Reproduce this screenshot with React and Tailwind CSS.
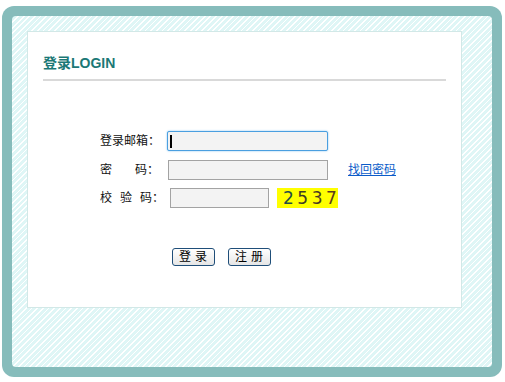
export default function App() {
  return (
    <div className="w-[505px] h-[382px] bg-white pt-[6px] pl-[2px] font-['Liberation_Sans','Noto_Sans_CJK_SC',sans-serif] text-[12px] text-[#111]">
      {/* teal frame */}
      <div className="w-[500px] h-[371px] rounded-[12px] bg-[#86bcbb] p-[10px]">
        {/* hatched area */}
        <div className="h-full rounded-[4px] bg-[image:repeating-linear-gradient(135deg,#ffffff_0px,#ffffff_1.2px,#dff6f6_1.2px,#dff6f6_4px)] pt-[15px] pl-[15px]">
          {/* white panel */}
          <div className="w-[435px] h-[277px] bg-white border border-[#d2e8e7] px-[15px]">
            <div className="mt-[22px] h-[27px] leading-[18px] border-b-2 border-[#d9d9d9] text-[14px] font-bold text-[#1b7876]">
              登录LOGIN
            </div>

            {/* form */}
            <div className="pl-[57px] mt-[50px]">
              <div className="flex items-center h-[20px]">
                <span className="w-[67px] leading-[20px]">登录邮箱：</span>
                <div className="relative w-[161px] h-[20px] border border-[#4a9fe0] rounded-[2px] bg-[#f3f3f3] shadow-[0_0_2px_#7fbff0]">
                  <span className="absolute left-[2px] top-[3px] w-[1.5px] h-[13px] bg-black" />
                </div>
              </div>

              <div className="flex items-center h-[20px] mt-[9px]">
                <span className="w-[68px] leading-[20px] flex">
                  <span>密</span>
                  <span className="ml-[23px]">码：</span>
                </span>
                <div className="w-[160px] h-[20px] border border-[#a3a3a3] bg-[#f3f3f3]" />
                <a href="#" className="ml-[20px] text-[#0b5cc9] underline">找回密码</a>
              </div>

              <div className="flex items-center h-[20px] mt-[8px]">
                <span className="w-[70px] leading-[20px] flex">
                  <span>校</span>
                  <span className="ml-[8px]">验</span>
                  <span className="ml-[8px]">码：</span>
                </span>
                <div className="w-[99px] h-[20px] border border-[#a3a3a3] bg-[#f3f3f3]" />
                <div className="ml-[8px] w-[61px] h-[20px] bg-[#ffff00] flex items-center pl-[6px] font-['DejaVu_Sans',sans-serif] text-[17px] tracking-[3.5px] leading-[20px]">
                  <span className="text-[#224c48]">2</span>
                  <span className="text-[#3d3a24]">5</span>
                  <span className="text-[#4a3a22]">3</span>
                  <span className="text-[#5a3a1c]">7</span>
                </div>
              </div>

              <div className="flex mt-[40px] pl-[72px] gap-[13px]">
                <button className="w-[43px] h-[18px] border border-[#1f4e79] rounded-[3px] bg-gradient-to-b from-white to-[#e6e6e6] text-[12px] leading-[16px] tracking-[4px] pl-[3px] text-black">
                  登录
                </button>
                <button className="w-[43px] h-[18px] border border-[#1f4e79] rounded-[3px] bg-gradient-to-b from-white to-[#e6e6e6] text-[12px] leading-[16px] tracking-[4px] pl-[3px] text-black">
                  注册
                </button>
              </div>
            </div>
          </div>
        </div>
      </div>
    </div>
  );
}
